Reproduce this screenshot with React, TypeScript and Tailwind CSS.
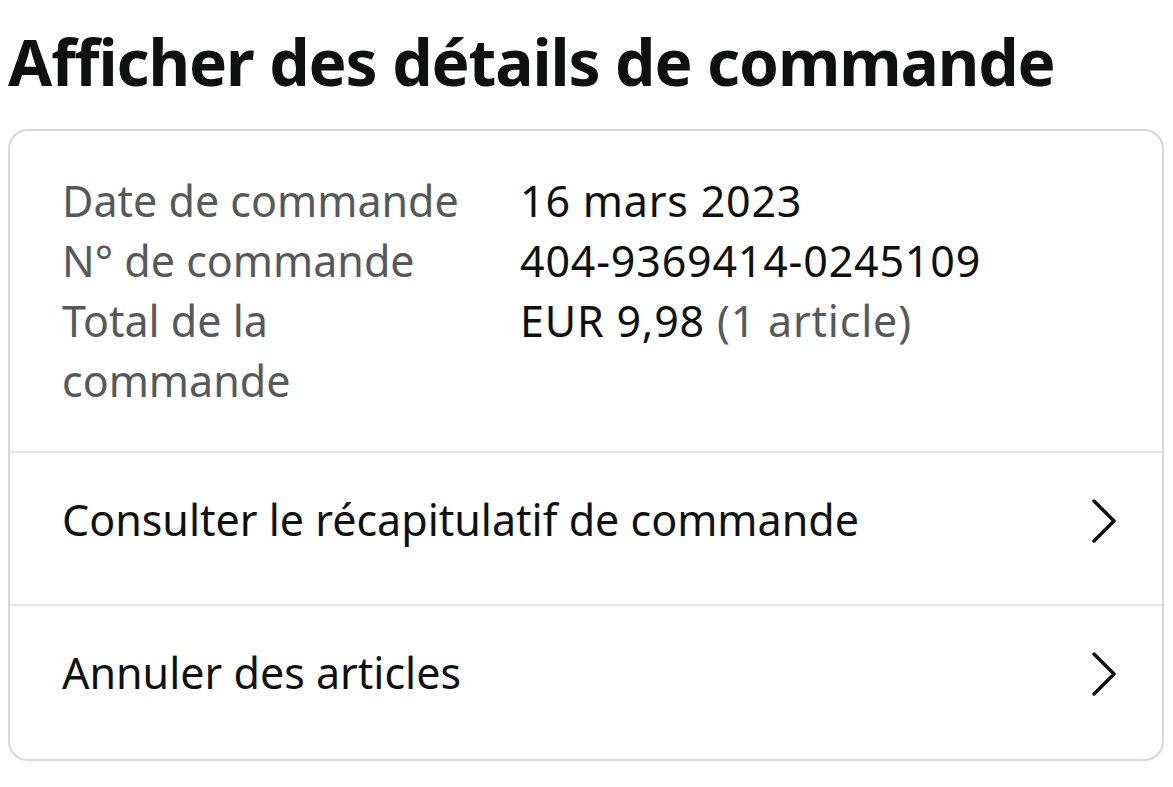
const Chevron = () => (
  <svg width="28" height="46" viewBox="0 0 28 46" fill="none" className="shrink-0">
    <path d="M4 3 L24 23 L4 43" stroke="#0f1111" strokeWidth="3.5" strokeLinecap="round" strokeLinejoin="round" />
  </svg>
);

const rows = [
  { label: "Date de commande", value: <>16 mars 2023</> },
  { label: "N° de commande", value: <>404-9369414-0245109</> },
  {
    label: "Total de la commande",
    value: (
      <>
        EUR 9,98 <span className="text-[#565959]">(1 article)</span>
      </>
    ),
  },
];

const links = ["Consulter le récapitulatif de commande", "Annuler des articles"];

export default function App() {
  return (
    <div className="min-h-[787px] w-[1173px] bg-white font-['Noto_Sans',sans-serif] text-[#0f1111]">
      <h1 className="px-2 pt-[22px] text-[64px] leading-[80px] font-bold tracking-[-1.1px]">
        Afficher des détails de commande
      </h1>
      <div className="mx-2 mt-[27px] w-[1156px] rounded-[20px] border-2 border-[#d5d9d9]">
        <div className="px-[52px] pt-[40px] pb-[40px]">
          {rows.map((r) => (
            <div key={r.label} className="flex text-[43px] leading-[60px]">
              <div className="w-[458px] shrink-0 pr-[50px] text-[#565959]">{r.label}</div>
              <div className="tracking-[0.8px]">{r.value}</div>
            </div>
          ))}
        </div>
        {links.map((l, i) => (
          <div
            key={l}
            className={`flex items-center justify-between border-t-2 border-[#e3e6e6] pr-[44px] pl-[52px] text-[43px] ${
              i === 0 ? "h-[153px] pb-[16px]" : "h-[155px] pb-[18px]"
            }`}
          >
            <span>{l}</span>
            <Chevron />
          </div>
        ))}
      </div>
    </div>
  );
}
